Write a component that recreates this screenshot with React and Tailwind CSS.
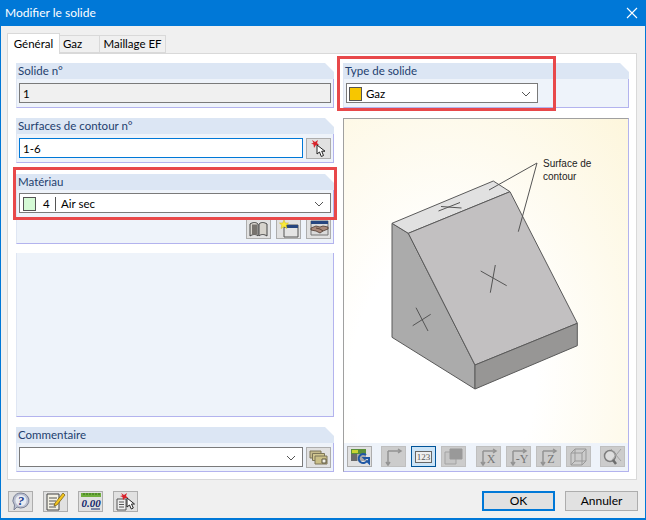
import React from 'react';

const Chevron = () => (
  <svg width="10" height="6" viewBox="0 0 10 6" className="shrink-0">
    <path d="M1 1l4 4 4-4" fill="none" stroke="#555" strokeWidth="1" />
  </svg>
);

const Group = ({ title, className = '', children }) => (
  <div className={`flex flex-col ${className}`}>
    {title ? (
      <div className="h-[16px] bg-[#dce6f4] pl-[2px] text-[11.500px] leading-[16px] text-[#23406e] [clip-path:polygon(0_0,calc(100%-9px)_0,100%_9px,100%_100%,0_100%)]">
        {title}
      </div>
    ) : null}
    <div className="flex-1 border-r border-b border-l border-r-[#b3b3ee] border-b-[#b3b3ee] border-l-[#dfe6f3] bg-[#eef3fa]">
      {children}
    </div>
  </div>
);

const Btn = ({ children, off, active, className = '' }) => (
  <div
    className={`flex h-[21px] w-[25px] shrink-0 items-center justify-center border ${
      active
        ? 'border-[#005499] bg-[#cce4f7]'
        : off
        ? 'border-[#bfbfbf] bg-[#cccccc]'
        : 'border-[#adadad] bg-[#e1e1e1]'
    } ${className}`}
  >
    {children}
  </div>
);

// small toolbar drawings
const PickIcon = () => (
  <svg width="20" height="19" viewBox="0 0 20 19">
    <path d="M3 1l3 2 3-2-1 3 2 2-3 0-2 3-.5-3.500L2 4.500l2.500-.5z" fill="#d8242c" />
    <path d="M8 6v9l2.500-2 1.800 4.500 2.200-1-1.800-4.300h3.300z" fill="#fff" stroke="#222" strokeWidth="1" />
  </svg>
);
const BookIcon = () => (
  <svg width="19" height="16" viewBox="0 0 19 16">
    <path d="M1 3c3-2 6-2 8 0v12c-2-2-5-2-8 0z" fill="#d9d6cf" stroke="#444" />
    <path d="M10 3c2-2 5-2 8 0v12c-3-2-6-2-8 0z" fill="#d6d3cc" stroke="#444" />
    <path d="M3 3.500h5v10H3z" fill="#77736e" />
  </svg>
);
const NewWinIcon = () => (
  <svg width="20" height="18" viewBox="0 0 20 18">
    <path d="M5 5h14v12H5z" fill="#e4e4e4" stroke="#555" />
    <path d="M5 5h14v3H5z" fill="#27467f" />
    <path d="M5 0l1.300 3L9.500 3 7.200 5.200 8 8.500 5 6.800 2 8.500l.800-3.300L.500 3l3.200 0z" fill="#f9ea3a" stroke="#c9b21a" strokeWidth=".5" />
  </svg>
);
const HandIcon = () => (
  <svg width="20" height="17" viewBox="0 0 20 17">
    <path d="M2 1h17v14H2z" fill="#dadada" stroke="#777" />
    <path d="M2 1h17v3H2z" fill="#27467f" />
    <path d="M2 8l5-2 4 1 3-1 5 1v2l-5 2-3 2-4-2-5-1z" fill="#a98a7c" stroke="#3d2a20" strokeWidth=".7" />
    <path d="M7 8l4 1 3 2" fill="none" stroke="#3d2a20" strokeWidth=".7" />
  </svg>
);
const FoldersIcon = () => (
  <svg width="19" height="15" viewBox="0 0 19 15">
    <path d="M1 1h11v7H1z" fill="#c4ba8c" stroke="#7c7558" />
    <path d="M3.500 3.500h12v7h-12z" fill="#d1c790" stroke="#7c7558" />
    <path d="M6 6h12v8H6z" fill="#cbc087" stroke="#7c7558" />
    <path d="M13 9h4v4h-4z" fill="#f4f2e6" stroke="#5c5640" />
  </svg>
);
const HelpIcon = () => (
  <svg width="20" height="19" viewBox="0 0 20 19">
    <path d="M10 1a8 7.500 0 1 1-4 14l-3 3 .5-5A8 7.500 0 0 1 10 1z" fill="#b9bfd0" stroke="#7c8296" />
    <circle cx="10" cy="8.500" r="5.500" fill="#e8ebf2" />
    <text x="10" y="13" textAnchor="middle" fontSize="13" fontWeight="700" fontStyle="italic" fill="#1f3f8f" fontFamily="Liberation Serif, serif">?</text>
  </svg>
);
const EditIcon = () => (
  <svg width="21" height="19" viewBox="0 0 21 19">
    <path d="M2 2h12v16H2z" fill="#f3f1e4" stroke="#444" />
    <path d="M4 6h8M4 9h7M4 12h6M4 15h7" stroke="#555" strokeWidth="1" />
    <path d="M18 1l2 2-8 10-3 1 1-3z" fill="#f3c51d" stroke="#6b5410" strokeWidth=".7" />
  </svg>
);
const UnitsIcon = () => (
  <svg width="22" height="19" viewBox="0 0 22 19">
    <path d="M1 1h20v4H1z" fill="#6fae3d" />
    <path d="M4 1v2M7 1v2M10 1v2M13 1v2M16 1v2M19 1v2" stroke="#356b18" />
    <text x="11" y="15" textAnchor="middle" fontSize="11" fontWeight="700" fontStyle="italic" fill="#14276b" fontFamily="Liberation Serif, serif">0.00</text>
    <path d="M11 17h9" stroke="#14276b" />
  </svg>
);
const DocPickIcon = () => (
  <svg width="21" height="20" viewBox="0 0 21 20">
    <path d="M2 7h9v11H2z" fill="#eee" stroke="#555" />
    <path d="M4 10h5M4 12.500h5M4 15h5" stroke="#555" />
    <path d="M6 1l3 2 3-2-1 3 2 2-3 0-2 2-.5-3L5 4l2.500-.5z" fill="#d8242c" />
    <path d="M12 6v9l2.500-2 1.800 4 2-1-1.800-4h3z" fill="#fff" stroke="#222" />
  </svg>
);
const ImageIcon = () => (
  <svg width="20" height="18" viewBox="0 0 20 18">
    <path d="M1 1h15v5H1z" fill="#5a8f3a" />
    <path d="M2 2h6v3H2z" fill="#c9d531" />
    <path d="M1 6h15v7H1z" fill="#a9a9a9" />
    <path d="M1 6h6v7H1z" fill="#6a6a6a" />
    <path d="M16 7a4.500 4.500 0 1 0 1 6l2 2v-5h-5l1.500 1.500" fill="none" stroke="#1f57a4" strokeWidth="2" />
  </svg>
);
const AxesIcon = ({ label }) => (
  <svg width="21" height="19" viewBox="0 0 21 19">
    <path d="M5 4h12M15 2l3 2-3 2M5 4v13M3 15l2 3 2-3" fill="none" stroke="#939393" strokeWidth="1.500" />
    {label ? (
      <text x={label.length > 1 ? 14 : 13} y="16" textAnchor="middle" fontSize="12" fill="#777" fontFamily="Liberation Serif, serif">{label}</text>
    ) : null}
  </svg>
);
const LayersIcon = () => (
  <svg width="19" height="17" viewBox="0 0 19 17">
    <path d="M1 4h11v12H1z" fill="#c6c6c6" stroke="#a3a3a3" />
    <path d="M6 1h12v10H6z" fill="#999" stroke="#999" />
  </svg>
);
const CubeIcon = () => (
  <svg width="19" height="18" viewBox="0 0 19 18">
    <path d="M2 5l4-4h11v12l-4 4H2zM2 5h11v12M13 5l4-4M6 1v12h11M6 13l-4 4" fill="none" stroke="#999" />
  </svg>
);
const ZoomOffIcon = () => (
  <svg width="21" height="19" viewBox="0 0 21 19">
    <circle cx="8" cy="9" r="5.500" fill="#ddd" stroke="#7e7e7e" strokeWidth="1.500" />
    <path d="M11 13l3 4" stroke="#6d6d6d" strokeWidth="2.500" />
    <path d="M9 2l10 12M19 2L10 13" stroke="#a3a3a3" strokeWidth="1" />
  </svg>
);

const Field = ({ className = '', children }) => (
  <div className={`flex h-[20px] items-center border border-[#7a7a7a] bg-white pt-px text-[11.500px] text-black ${className}`}>
    {children}
  </div>
);

const Shape = () => (
  <svg viewBox="344 119 284 324" className="h-full w-full">
    <g stroke="#5a5a5a" strokeWidth="1" strokeLinejoin="round">
      <path d="M392 223.300L408.300 233.300 475 365V389L392 337.300z" fill="#ababab" />
      <path d="M392 223.300L493.300 181 510 191.700 408.300 233.300z" fill="#e1e1e1" />
      <path d="M408.300 233.300L510 191.700 577.300 323.300 475 365z" fill="#c2c0c1" />
      <path d="M475 365L577.300 323.300V345.700L475 389z" fill="#979695" />
    </g>
    <g stroke="#555" strokeWidth="1" fill="none">
      <path d="M537 163L489 190M537 163L518.300 231.700" />
      <path d="M480.700 271L506.700 285.700M495.300 265L490.300 292.700" />
      <path d="M416 307.700L428 331M412.700 325.700L430.700 314.300" />
      <path d="M438.500 211L460 202.500M441 206.500L461.500 208" />
    </g>
  </svg>
);

const App = () => {
  return (
    <div className="relative flex h-[520px] w-[646px] flex-col overflow-hidden border-x border-b-2 border-[#0078d7] bg-[#f0f0f0] font-['Lato','Liberation_Sans',sans-serif] text-[11.500px] text-black">
      {/* Title bar */}
      <div className="flex h-[26px] shrink-0 items-center justify-between bg-[#0078d7] pr-[7px] pl-[4px] text-[12px] text-white">
        <span>Modifier le solide</span>
        <svg width="12" height="12" viewBox="0 0 12 12">
          <path d="M1 1l10 10M11 1L1 11" stroke="#fff" strokeWidth="1.100" />
        </svg>
      </div>

      {/* Tabs */}
      <div className="relative z-10 ml-[6px] flex h-[27px] shrink-0 items-end">
        <div className="-mb-px flex h-[21px] w-[53px] items-center justify-center border border-b-0 border-[#d9d9d9] bg-white">Général</div>
        <div className="flex h-[18px] w-[40px] items-center border-y border-r border-[#d9d9d9] bg-[#f0f0f0] pl-[3px]">Gaz</div>
        <div className="flex h-[18px] w-[66px] items-center justify-center border-y border-r border-[#d9d9d9] bg-[#f0f0f0]">Maillage EF</div>
      </div>

      {/* Panel */}
      <div className="mr-[8px] ml-[6px] flex h-[427px] shrink-0 gap-[9px] border border-[#d9d9d9] bg-white pt-[9px] pr-[6px] pb-[7px] pl-[8px]">
        {/* Left column */}
        <div className="flex w-[318px] shrink-0 flex-col">
          <Group title="Solide n°" className="h-[45px]">
            <div className="mx-[2px] mt-[4px] flex h-[20px] items-center border border-[#7a7a7a] bg-[#f0f0f0] pt-px pl-[3px]">1</div>
          </Group>
          <Group title="Surfaces de contour n°" className="mt-[10px] h-[45px]">
            <div className="mx-[2px] mt-[4px] flex items-start gap-[3px]">
              <Field className="flex-1 border-[#0078d7] pl-[3px]">1-6</Field>
              <Btn><PickIcon /></Btn>
            </div>
          </Group>
          <Group title="Matériau" className="mt-[11px] h-[70px]">
            <div className="mx-[2px] mt-[3px]">
              <Field className="pr-[6px] pl-[3px]">
                <span className="h-[14px] w-[13px] border border-[#555] bg-[#d5fad5]" />
                <span className="ml-[7px] w-[6px]">4</span>
                <span className="ml-[6px] h-[14px] w-px bg-[#555]" />
                <span className="ml-[5px] flex-1">Air sec</span>
                <Chevron />
              </Field>
            </div>
            <div className="mt-[5px] mr-[2px] flex justify-end gap-[5px]">
              <Btn><BookIcon /></Btn>
              <Btn><NewWinIcon /></Btn>
              <Btn><HandIcon /></Btn>
            </div>
          </Group>
          <Group className="mt-[9px] h-[164px]" />
          <Group title="Commentaire" className="mt-[10px] h-[45px]">
            <div className="mx-[2px] mt-[4px] flex items-start gap-[3px]">
              <Field className="flex-1 justify-end pr-[6px]"><Chevron /></Field>
              <Btn><FoldersIcon /></Btn>
            </div>
          </Group>
        </div>

        {/* Right column */}
        <div className="flex w-[286px] shrink-0 flex-col">
          <Group title="Type de solide" className="h-[45px]">
            <div className="mt-[4px] ml-[2px] w-[192px]">
              <Field className="pr-[6px] pl-[2px]">
                <span className="h-[14px] w-[13px] border border-[#555] bg-[#f7c600]" />
                <span className="ml-[4px] flex-1">Gaz</span>
                <Chevron />
              </Field>
            </div>
          </Group>

          <div className="mt-[10px] flex h-[354px] flex-col border border-t-[#a0a0a0] border-r-[#b3b3ee] border-b-[#b3b3ee] border-l-[#a0a0a0]">
            <div className="relative min-h-0 flex-1 bg-[radial-gradient(ellipse_at_35%_80%,#ffffff_35%,#fdf6dc_100%)]">
              <Shape />
              <span className="absolute top-[38px] left-[199px] font-['Liberation_Sans',sans-serif] text-[10px] leading-[13px] text-[#222]">
                Surface de<br />contour
              </span>
            </div>
            <div className="flex h-[28px] shrink-0 items-start bg-[#eef3fa] pt-[3px] pl-[3px]">
              <Btn><ImageIcon /></Btn>
              <Btn off className="ml-[9px]"><AxesIcon /></Btn>
              <Btn active className="ml-[5px]">
                <span className="border border-[#666] bg-[#eee] px-px font-['Liberation_Serif',serif] text-[9px] leading-[10px] text-[#555]">123</span>
              </Btn>
              <Btn off className="ml-[5px]"><LayersIcon /></Btn>
              <Btn off className="ml-[10px]"><AxesIcon label="X" /></Btn>
              <Btn off className="ml-[5px]"><AxesIcon label="-Y" /></Btn>
              <Btn off className="ml-[5px]"><AxesIcon label="Z" /></Btn>
              <Btn off className="ml-[5px]"><CubeIcon /></Btn>
              <Btn off className="ml-[9px]"><ZoomOffIcon /></Btn>
            </div>
          </div>
        </div>
      </div>

      {/* Bottom bar */}
      <div className="flex flex-1 items-start pt-[11px] pr-[7px] pl-[7px]">
        <Btn><HelpIcon /></Btn>
        <Btn className="ml-[10px]"><EditIcon /></Btn>
        <Btn className="ml-[10px]"><UnitsIcon /></Btn>
        <Btn className="ml-[10px]"><DocPickIcon /></Btn>
        <div className="ml-auto flex h-[20px] w-[73px] items-center justify-center border-2 border-[#0078d7] bg-[#e1e1e1] text-[12px]">OK</div>
        <div className="ml-[10px] flex h-[20px] w-[73px] items-center justify-center border border-[#adadad] bg-[#e1e1e1] text-[12px]">Annuler</div>
      </div>

      {/* Annotation frames */}
      <div className="pointer-events-none absolute top-[56px] left-[336px] z-20 h-[55px] w-[219px] border-[3px] border-[#e8484a]" />
      <div className="pointer-events-none absolute top-[167px] left-[12px] z-20 h-[53px] w-[324px] border-[3px] border-[#e8484a]" />
    </div>
  );
};

export default App;
